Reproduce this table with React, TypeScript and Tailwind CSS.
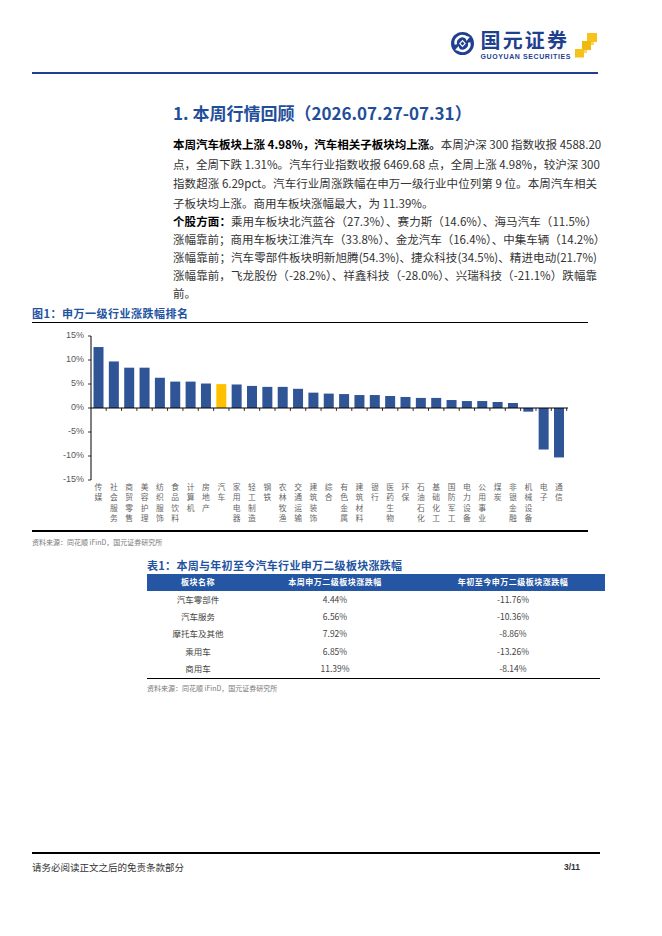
import React from "react";

const cats: [string, number][] = [
  ["传媒", 12.7], ["社会服务", 9.7], ["商贸零售", 8.4], ["美容护理", 8.4], ["纺织服饰", 6.3],
  ["食品饮料", 5.5], ["计算机", 5.5], ["房地产", 5.1], ["汽车", 4.98], ["家用电器", 4.9],
  ["轻工制造", 4.6], ["钢铁", 4.4], ["农林牧渔", 4.4], ["交通运输", 4.0], ["建筑装饰", 3.2],
  ["综合", 3.0], ["有色金属", 2.9], ["建筑材料", 2.7], ["银行", 2.7], ["医药生物", 2.5],
  ["环保", 2.3], ["石油石化", 2.1], ["基础化工", 2.1], ["国防军工", 1.66], ["电力设备", 1.45],
  ["公用事业", 1.45], ["煤炭", 1.25], ["非银金融", 1.04], ["机械设备", -0.76], ["电子", -8.65],
  ["通信", -10.3],
];

const FONT = "'Noto Sans CJK SC', 'Noto Sans', sans-serif";

function Logo() {
  return (
    <div className="flex items-start">
      <svg width="23" height="23" viewBox="0 0 24 24" className="mr-[6px] mt-[2px]">
        <circle cx="12" cy="12" r="12" fill="#1f3f8f" />
        <path d="M5 13 A7 7 0 0 1 16.5 6.2" fill="none" stroke="#fff" strokeWidth="2.6" />
        <polygon points="14.2,3.6 19.6,5.2 16.2,9.4" fill="#fff" />
        <path d="M19 11 A7 7 0 0 1 7.5 17.8" fill="none" stroke="#fff" strokeWidth="2.6" />
        <polygon points="9.8,20.4 4.4,18.8 7.8,14.6" fill="#fff" />
        <polygon points="12,8.2 15.6,12 12,15.8 8.4,12" fill="#fff" />
        <polygon points="12,9.8 14,12 12,14.2 10,12" fill="#1f3f8f" />
      </svg>
      <div className="flex flex-col items-start">
        <div
          className="text-[20px] font-bold leading-[20px] text-[#1f3f8f] tracking-[2.2px]"
          style={{ fontFamily: FONT }}
        >
          国元证券
        </div>
        <div
          className="mt-[3px] text-[7px] font-bold leading-[8px] text-[#1f3f8f] tracking-[0.6px]"
          style={{ fontFamily: "'Liberation Sans', Arial, sans-serif" }}
        >
          GUOYUAN SECURITIES
        </div>
      </div>
      <svg width="24" height="26" viewBox="0 0 24 26" className="ml-[3px] mt-[2px]">
        <rect x="13" y="1" width="10" height="9" fill="#f7c31b" />
        <rect x="8" y="9" width="9" height="9" fill="#f0b90e" />
        <rect x="1" y="17" width="9" height="8.5" fill="#f5c21a" />
        <rect x="17" y="10" width="3" height="3" fill="#f9d75e" />
        <rect x="10" y="18" width="3" height="3" fill="#f9d75e" />
      </svg>
    </div>
  );
}

function Chart() {
  const x0 = 98.5;
  const step = 15.35;
  const zero = 408;
  const k = 4.8;
  const ylabels = [
    ["15%", 336], ["10%", 360], ["5%", 384], ["0%", 408], ["-5%", 432], ["-10%", 456], ["-15%", 480],
  ] as [string, number][];
  return (
    <svg width="556" height="207" viewBox="32 323 556 207" className="block">
      {ylabels.map(([t, y]) => (
        <g key={t}>
          <text
            x="84"
            y={y}
            textAnchor="end"
            dominantBaseline="middle"
            fontSize="9"
            fill="#595959"
            fontFamily="'Liberation Sans', Arial, sans-serif"
          >
            {t}
          </text>
          <line x1="88" x2="91" y1={y} y2={y} stroke="#000" strokeWidth="0.8" />
        </g>
      ))}
      <line x1="91" x2="91" y1="336" y2="480" stroke="#000" strokeWidth="1" />
      {cats.map(([name, v], i) => {
        const cx = x0 + i * step;
        const h = Math.abs(v) * k;
        const y = v >= 0 ? zero - h : zero;
        return (
          <g key={name}>
            <rect x={cx - 5} y={y} width="10" height={h} fill={name === "汽车" ? "#ffc000" : "#2f5597"} />
            {name.split("").map((ch, j) => (
              <text
                key={j}
                x={cx}
                y={488 + j * 10.2}
                textAnchor="middle"
                dominantBaseline="middle"
                fontSize="7.8"
                fill="#666"
                fontFamily={FONT}
              >
                {ch}
              </text>
            ))}
          </g>
        );
      })}
      <line x1="91" x2="568" y1={zero} y2={zero} stroke="#000" strokeWidth="1" />
      {cats.map((_, i) => (
        <line
          key={i}
          x1={x0 + step / 2 + i * step}
          x2={x0 + step / 2 + i * step}
          y1={zero}
          y2={zero + 3}
          stroke="#000"
          strokeWidth="0.8"
        />
      ))}
    </svg>
  );
}

const J = "whitespace-nowrap text-justify [text-align-last:justify]";
const L = "whitespace-nowrap";

const rows = [
  ["汽车零部件", "4.44%", "-11.76%"],
  ["汽车服务", "6.56%", "-10.36%"],
  ["摩托车及其他", "7.92%", "-8.86%"],
  ["乘用车", "6.85%", "-13.26%"],
  ["商用车", "11.39%", "-8.14%"],
];

export default function App() {
  return (
    <div className="relative w-[662px] h-[936px] bg-white flex flex-col overflow-hidden" style={{ fontFamily: FONT }}>
      {/* header */}
      <div className="h-[72px] flex justify-end pr-[64px] pt-[30px]">
        <Logo />
      </div>
      <div className="ml-[32px] w-[566px] h-[2px] bg-[#1f3f8f]" />

      {/* section */}
      <div className="ml-[173px] w-[424px] mt-[28px]">
        <div className="text-[17px] font-bold leading-[22px] text-[#1f4e9a] whitespace-nowrap">
          1. 本周行情回顾（2026.07.27-07.31）
        </div>
        <div className="mt-[11px] text-[11.5px] leading-[19.5px] text-[#333]">
          <div className={J}>
            <span className="font-bold text-black">本周汽车板块上涨 4.98%，汽车相关子板块均上涨。</span>本周沪深 300 指数收报 4588.20
          </div>
          <div className={J}>点，全周下跌 1.31%。汽车行业指数收报 6469.68 点，全周上涨 4.98%，较沪深 300</div>
          <div className={J}>指数超涨 6.29pct。汽车行业周涨跌幅在申万一级行业中位列第 9 位。本周汽车相关</div>
          <div className={L}>子板块均上涨。商用车板块涨幅最大，为 11.39%。</div>
        </div>
        <div className="mt-[-1px] text-[11.5px] leading-[18px] text-[#333]">
          <div className={J}>
            <span className="font-bold text-black">个股方面：</span>乘用车板块北汽蓝谷（27.3%）、赛力斯（14.6%）、海马汽车（11.5%）
          </div>
          <div className={J}>涨幅靠前；商用车板块江淮汽车（33.8%）、金龙汽车（16.4%）、中集车辆（14.2%）</div>
          <div className={J}>涨幅靠前；汽车零部件板块明新旭腾(54.3%)、捷众科技(34.5%)、精进电动(21.7%)</div>
          <div className={J}>涨幅靠前，飞龙股份（-28.2%）、祥鑫科技（-28.0%）、兴瑞科技（-21.1%）跌幅靠</div>
          <div className={L}>前。</div>
        </div>
      </div>

      {/* figure */}
      <div className="ml-[32px] w-[556px] mt-[4px]">
        <div className="text-[11px] font-bold leading-[14px] text-[#2353a0] tracking-[0.5px] pb-[2px]">
          图1：申万一级行业涨跌幅排名
        </div>
        <div className="h-[1px] bg-black" />
        <Chart />
        <div className="h-[1.5px] bg-black" />
        <div className="mt-[5px] text-[7px] leading-[10px] text-[#777]">资料来源：同花顺 iFinD，国元证券研究所</div>
      </div>

      {/* table */}
      <div className="ml-[147px] w-[458px] mt-[12px]">
        <div className="text-[11px] font-bold leading-[13px] text-[#2353a0] tracking-[0.3px]">
          表1：本周与年初至今汽车行业申万二级板块涨跌幅
        </div>
        <div className="mt-[2px] grid grid-cols-[102px_172px_184px] bg-[#2456a4] h-[17px] items-center text-[8px] font-bold text-white tracking-[0.5px]">
          <div className="text-center">板块名称</div>
          <div className="text-center">本周申万二级板块涨跌幅</div>
          <div className="text-center">年初至今申万二级板块涨跌幅</div>
        </div>
        <div>
          {rows.map((r) => (
            <div key={r[0]} className="grid grid-cols-[102px_172px_184px] h-[17.3px] items-center text-[8.5px] text-[#444]">
              <div className="text-center">{r[0]}</div>
              <div className="text-center">{r[1]}</div>
              <div className="text-center">{r[2]}</div>
            </div>
          ))}
        </div>
        <div className="mt-[1px] w-[453px] h-[1px] bg-black" />
        <div className="mt-[4px] text-[7px] leading-[10px] text-[#777]">资料来源：同花顺 iFinD，国元证券研究所</div>
      </div>

      {/* footer */}
      <div className="mt-auto mb-[62px] ml-[32px] w-[568px]">
        <div className="h-[2px] bg-black" />
        <div className="mt-[6px] flex justify-between items-center">
          <div className="text-[9.5px] text-[#333] leading-[14px]">请务必阅读正文之后的免责条款部分</div>
          <div
            className="mr-[20px] text-[8.5px] font-bold text-[#333]"
            style={{ fontFamily: "'Liberation Sans', Arial, sans-serif" }}
          >
            3/11
          </div>
        </div>
      </div>
    </div>
  );
}
